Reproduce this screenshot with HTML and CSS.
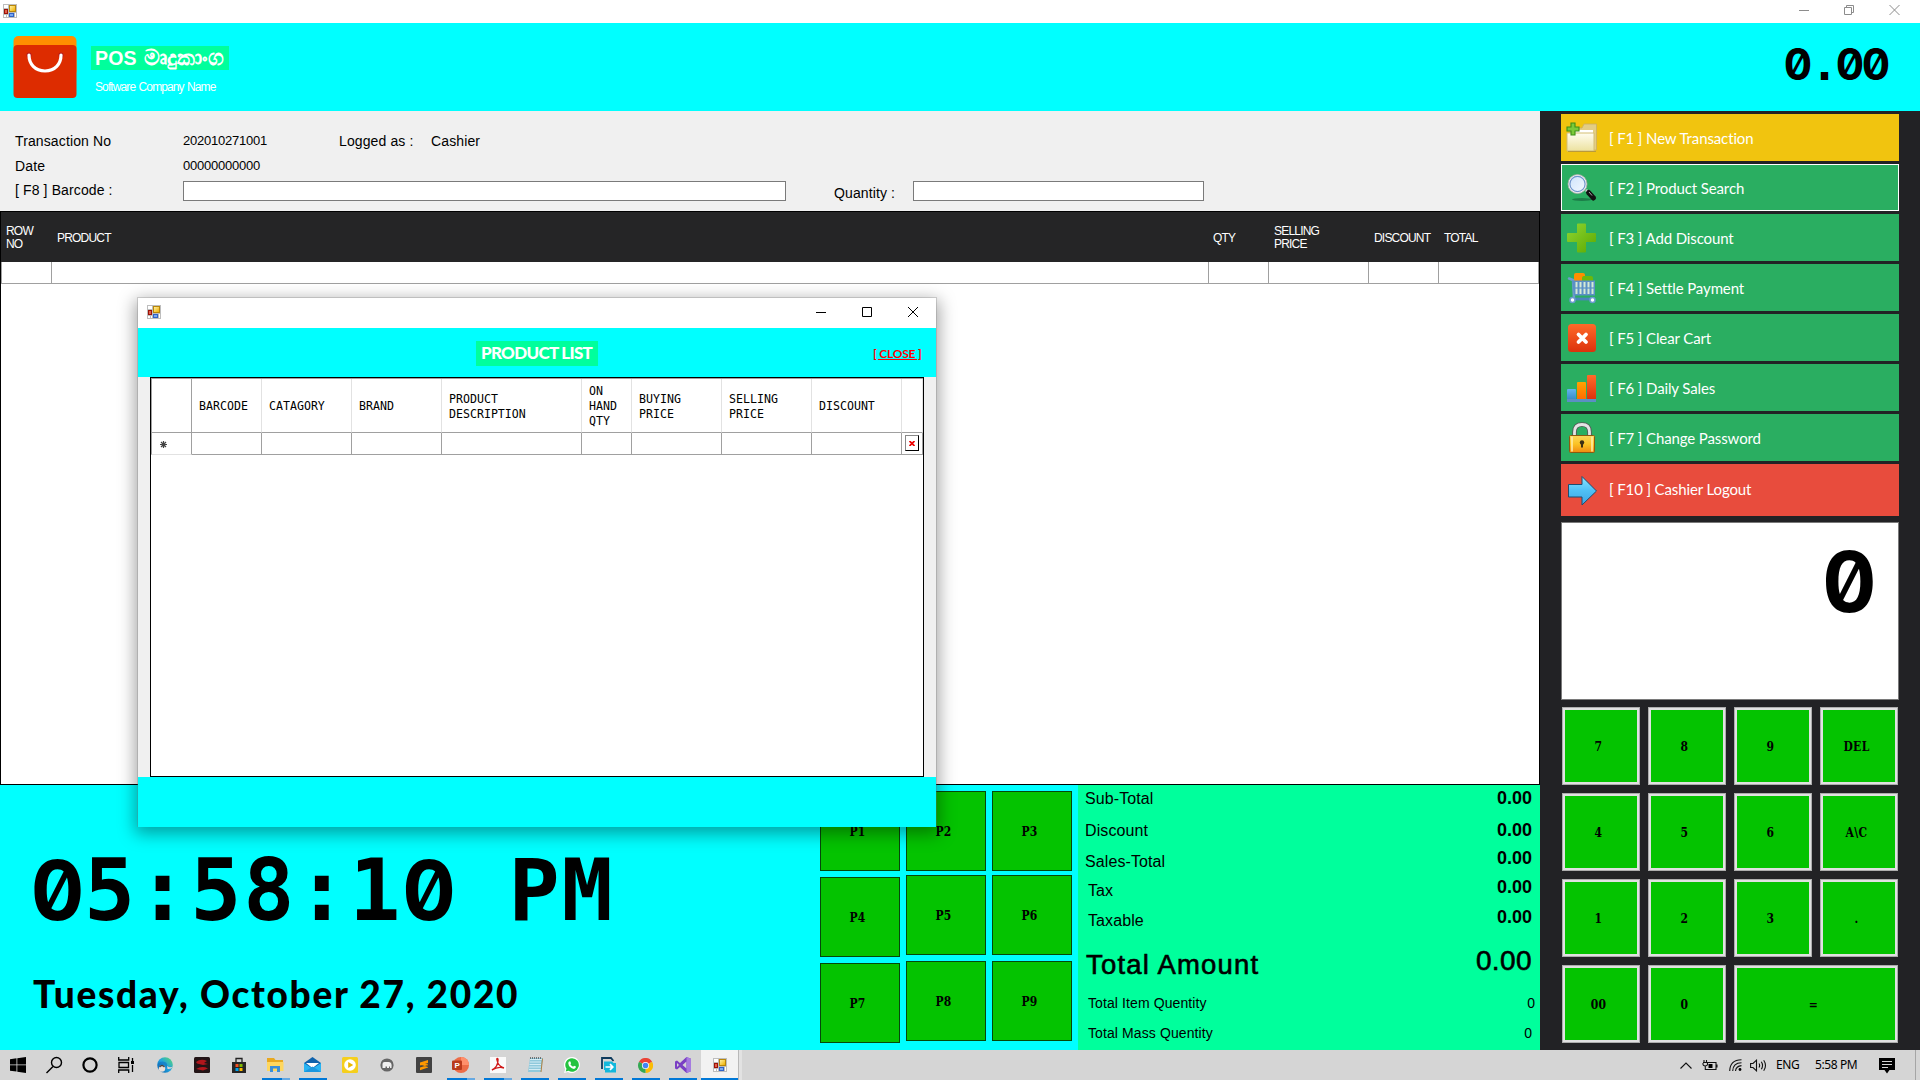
FILE: index.html
```html
<!DOCTYPE html>
<html lang="en">
<head>
<meta charset="utf-8">
<title>POS</title>
<link rel="stylesheet" href="styles.css">
</head>
<body>
<svg class="defs" width="0" height="0">
  <defs>
    <linearGradient id="gFolder" x1="0" y1="0" x2="0" y2="1"><stop offset="0" stop-color="#fffdf0"/><stop offset="1" stop-color="#ece29f"/></linearGradient>
    <linearGradient id="gPlus" x1="0" y1="0" x2="1" y2="1"><stop offset="0" stop-color="#8fd632"/><stop offset="1" stop-color="#5aa800"/></linearGradient>
    <linearGradient id="gRed" x1="0" y1="0" x2="0" y2="1"><stop offset="0" stop-color="#ff6a29"/><stop offset="1" stop-color="#dc320c"/></linearGradient>
    <linearGradient id="gOrange" x1="0" y1="0" x2="0" y2="1"><stop offset="0" stop-color="#ffa300"/><stop offset="1" stop-color="#ff6c00"/></linearGradient>
    <linearGradient id="gBlue" x1="0" y1="0" x2="0" y2="1"><stop offset="0" stop-color="#62b4f0"/><stop offset="1" stop-color="#3a8cc8"/></linearGradient>
    <linearGradient id="gLock" x1="0" y1="0" x2="0" y2="1"><stop offset="0" stop-color="#fbd75c"/><stop offset=".5" stop-color="#fbc324"/><stop offset="1" stop-color="#f08a10"/></linearGradient>
    <linearGradient id="gArrow" x1="0" y1="0" x2="0" y2="1"><stop offset="0" stop-color="#8ae6ff"/><stop offset=".5" stop-color="#4fc0f5"/><stop offset="1" stop-color="#3fa4e2"/></linearGradient>
    <linearGradient id="gYellow" x1="0" y1="0" x2="1" y2="1"><stop offset="0" stop-color="#fff0a0"/><stop offset="1" stop-color="#f0b000"/></linearGradient>
    <linearGradient id="gLens" x1="0" y1="0" x2="1" y2="1"><stop offset="0" stop-color="#cfe4fb"/><stop offset="1" stop-color="#f2f8ff"/></linearGradient>
    <linearGradient id="gEdge" x1="0" y1="1" x2="1" y2="0"><stop offset="0" stop-color="#0c59a4"/><stop offset=".5" stop-color="#1fa3e0"/><stop offset="1" stop-color="#5fdc6a"/></linearGradient>
    <symbol id="form" viewBox="0 0 14 14">
      <path fill="#bdbdbd" d="M0 0h14v14H0z"/><path fill="#fff" d="M1 1h4v3H1zM1 11h2v2H1zM4 11h1v2H4zM12 9h1v4h-1z"/>
      <path fill="#b8860b" d="M6 1h7v7H6z"/><path fill="url(#gYellow)" d="M7 2h5v5H7z"/>
      <path fill="#9c1208" d="M1 5h4v5H1z"/><path fill="#e0604a" d="M2 6h2v3H2z"/>
      <path fill="#2f62c8" d="M6 9h5v4H6z"/><path fill="#7aa8f0" d="M7 10h3v2H7z"/>
    </symbol>
  </defs>
</svg>

<div class="app">
  <div class="titlebar">
    <svg width="14" height="14"><use href="#form"/></svg>
    <div class="winbtns">
      <svg width="10" height="10" viewBox="0 0 10 10"><path d="M0 5.500h10"/></svg>
      <svg width="10" height="10" viewBox="0 0 10 10"><path d="M.5 2.500h7v7h-7zM2.500 2.500v-2h7v7h-2"/></svg>
      <svg width="11" height="10" viewBox="0 0 11 10"><path d="M.5 0l10 10M10.500 0l-10 10"/></svg>
    </div>
  </div>

  <header class="banner">
    <svg class="logo" width="64" height="63" viewBox="0 0 64 63">
      <rect x=".5" width="63" height="40" rx="5" fill="#ff8f00"/>
      <rect x=".5" y="9" width="63" height="53" rx="4" fill="#dd2c00"/>
      <circle cx="16" cy="19" r="2.600" fill="#b71c1c"/><circle cx="48" cy="19" r="2.600" fill="#b71c1c"/>
      <path d="M16 19c0 9 6 16 16 16s16-7 16-16" fill="none" stroke="#fff" stroke-width="3.200" stroke-linecap="round"/>
    </svg>
    <div class="brand">
      <div class="brand-name">POS <span class="sinhala">මෘදුකාංග</span></div>
      <div class="brand-sub">Software Company Name</div>
    </div>
    <div class="banner-total"><span class="z">0</span>.<span class="z">0</span><span class="z">0</span></div>
  </header>

  <main class="body">
    <section class="left">
      <div class="info">
        <span class="lbl r1">Transaction No</span><span class="num r1">202010271001</span>
        <span class="lbl logged">Logged as :</span><span class="lbl cashier">Cashier</span>
        <span class="lbl date">Date</span><span class="num datev">00000000000</span>
        <span class="lbl bar">[ F8 ] Barcode :</span><span class="field barv"></span>
        <span class="lbl qty">Quantity :</span><span class="field qtyv"></span>
      </div>

      <div class="cart">
        <div class="cart-head">
          <span>ROW<br>NO</span><span>PRODUCT</span><span>QTY</span><span>SELLING<br>PRICE</span><span>DISCOUNT</span><span>TOTAL</span>
        </div>
        <div class="cart-row"><i></i><i></i><i></i><i></i><i></i><i></i></div>
      </div>

      <div class="bottom">
        <div class="clock">
          <div class="time"><span class="z">0</span>5:58:1<span class="z">0</span> PM</div>
          <div class="today">Tuesday, October 27, 2020</div>
        </div>
        <div class="presets">
          <div class="pcol first"><b>P1</b><b>P4</b><b>P7</b></div>
          <div class="pcol"><b>P2</b><b>P5</b><b>P8</b></div>
          <div class="pcol"><b>P3</b><b>P6</b><b>P9</b></div>
        </div>
        <div class="totals">
          <div class="tcol names">
            <span>Sub-Total</span><span>Discount</span><span>Sales-Total</span><span class="in">Tax</span><span class="in">Taxable</span>
            <span class="grand">Total Amount</span><span class="small">Total Item Quentity</span><span class="small">Total Mass Quentity</span>
          </div>
          <div class="tcol values">
            <span>0.00</span><span>0.00</span><span>0.00</span><span>0.00</span><span>0.00</span>
            <span class="grand">0.00</span><span class="small out">0</span><span class="small">0</span>
          </div>
        </div>
      </div>
    </section>

    <aside class="side">
      <div class="menu">
        <div class="item new"><svg width="34" height="32" viewBox="0 0 34 32">
          <path d="M5 6h12l2-4h12.500v26H5z" fill="#e3cd84" stroke="#c9ad63" stroke-width=".8"/><path d="M10 8h18v18H10z" fill="#fff"/>
          <path d="M2 11h27v18H2z" fill="url(#gFolder)" stroke="#d3bd72" stroke-width="1"/><path d="M3 29.500h28" stroke="#b99a3c"/>
          <path d="M6 1h4v4h4v4h-4v4H6V9H2V5h4z" fill="#7cc93a" stroke="#3d8f16" stroke-width="1.100"/></svg><span>[ F1 ] New Transaction</span></div>
        <div class="item sel"><svg width="34" height="32" viewBox="0 0 34 32">
          <ellipse cx="17" cy="27.500" rx="10" ry="1.500" fill="#1c7d48"/>
          <path d="M21 18l2 2" stroke="#ddd" stroke-width="2.500"/><path d="M23.500 20.500l5 5.500" stroke="#111" stroke-width="5" stroke-linecap="round"/><path d="M24 20l3 3.500" stroke="#aaa" stroke-width="1"/>
          <circle cx="12.500" cy="12" r="9.500" fill="#f4f4f4" stroke="#a8a8a8" stroke-width=".8"/><circle cx="12.500" cy="12" r="7.600" fill="url(#gLens)" stroke="#6f94cc" stroke-width="1.200"/></svg><span>[ F2 ] Product Search</span></div>
        <div class="item"><svg width="34" height="32" viewBox="0 0 34 32">
          <path d="M13 1.500h7q1 0 1 1V11h9q1 0 1 1v7q0 1-1 1h-9v9.500q0 1-1 1h-7q-1 0-1-1V20H3q-1 0-1-1v-7q0-1 1-1h9V2.500q0-1 1-1z" fill="url(#gPlus)"/></svg><span>[ F3 ] Add Discount</span></div>
        <div class="item"><svg width="34" height="32" viewBox="0 0 34 32">
          <rect x="9" y="1" width="11" height="10" rx="2" fill="#ff8f00"/><rect x="17" y="4" width="11" height="8" rx="2" fill="#6cb80c"/>
          <path d="M4 6.500l4 1.500 1 18" fill="none" stroke="#6f9dcc" stroke-width="2.500" stroke-linecap="round"/>
          <path d="M7 8.500h23v15H9z" fill="#5b90c6"/><path d="M11.500 10v12M15.500 10v12M19.500 10v12M23.500 10v12M27.500 10v12" stroke="#d5ead5" stroke-width="2"/><path d="M10 16h19" stroke="#5b90c6" stroke-width="1.200"/>
          <path d="M8 27h21" stroke="#4a84bc" stroke-width="2.800"/><circle cx="7.500" cy="28" r="2.500" fill="#fff" stroke="#6c9bd0" stroke-width="1.500"/><circle cx="27.500" cy="28" r="2.500" fill="#fff" stroke="#6c9bd0" stroke-width="1.500"/></svg><span>[ F4 ] Settle Payment</span></div>
        <div class="item"><svg width="34" height="32" viewBox="0 0 34 32">
          <rect x="3" y="2" width="28" height="28" rx="3.500" fill="url(#gRed)"/><path d="M13.500 12.500l7.500 7.500M21 12.500L13.500 20" stroke="#fff" stroke-width="3.800" stroke-linecap="round"/></svg><span>[ F5 ] Clear Cart</span></div>
        <div class="item"><svg width="34" height="32" viewBox="0 0 34 32">
          <path d="M2 18q0-1 1-1h7q1 0 1 1v9H2z" fill="url(#gBlue)"/><path d="M12 11q0-1 1-1h7q1 0 1 1v16h-9z" fill="url(#gOrange)"/><path d="M22 4q0-1 1-1h7q1 0 1 1v23h-9z" fill="url(#gRed)"/><path d="M2 27h29v3H2z" fill="#5b8fc4"/></svg><span>[ F6 ] Daily Sales</span></div>
        <div class="item"><svg width="34" height="32" viewBox="0 0 34 32">
          <path d="M9.500 15V10q0-7.500 7.500-7.500T24.500 10v5" fill="none" stroke="#555" stroke-width="4.500"/><path d="M9.500 15V10q0-7.500 7.500-7.500T24.500 10v5" fill="none" stroke="#e4e4e4" stroke-width="2.800"/>
          <rect x="4.500" y="13.500" width="25" height="17" rx="1" fill="url(#gLock)" stroke="#8a5a10" stroke-width="1"/><path d="M7 14.500v15M27 14.500v15" stroke="#fff0b0" stroke-width="1.500"/>
          <circle cx="17" cy="20.500" r="2.200" fill="#3b2f14"/><path d="M17 21v4.500" stroke="#3b2f14" stroke-width="2"/></svg><span>[ F7 ] Change Password</span></div>
        <div class="item out"><svg width="34" height="32" viewBox="0 0 34 32">
          <path d="M3.500 10.500H17V2.500L31.500 17 17 31V23H3.500z" fill="url(#gArrow)" stroke="#1d4d70" stroke-width="1"/></svg><span>[ F10 ] Cashier Logout</span></div>
      </div>
      <div class="display"><span class="z">0</span></div>
      <div class="keypad">
        <b>7</b><b>8</b><b>9</b><b>DEL</b><b>4</b><b>5</b><b>6</b><b>A\C</b><b>1</b><b>2</b><b>3</b><b>.</b><b>00</b><b>0</b><b class="wide">=</b>
      </div>
    </aside>
  </main>

  <footer class="taskbar">
    <div class="tasks">
      <span class="t"><svg width="16" height="16" viewBox="0 0 16 16"><path d="M0 2.200l6.500-.9v6.200H0zM7.300 1.200L16 0v7.500H7.300zM0 8.300h6.500v6.200L0 13.700zM7.300 8.300H16V16l-8.700-1.200z"/></svg></span>
      <span class="t"><svg width="18" height="18" viewBox="0 0 18 18"><g fill="none" stroke="#000" stroke-width="1.400"><circle cx="11.500" cy="6.500" r="5"/><path d="M8 10.500L1.500 17"/></g></svg></span>
      <span class="t"><svg width="16" height="16" viewBox="0 0 16 16"><circle cx="8" cy="8" r="6.600" fill="none" stroke="#000" stroke-width="2.200"/></svg></span>
      <span class="t"><svg width="17" height="16" viewBox="0 0 17 16"><g fill="none" stroke="#000" stroke-width="1.300"><path d="M.7 0v3h10V0M.7 16v-3h10v3M1 5.500h9.500v5H1zM14.500 1v3M14.500 8v7"/></g><path d="M13 4h3v3h-3z"/></svg></span>
      <span class="t e"><svg width="16" height="16" viewBox="0 0 16 16"><circle cx="8" cy="8" r="7.800" fill="url(#gEdge)"/><path d="M1 6.500Q4 3.500 8 5q3 1.500 2 4.500 3 1 5.500-.5Q14 12 10 11 8 8 5.500 8 3 8 1 10z" fill="#0f6cbd" opacity=".55"/><path d="M10 9q2 2 5.800.5-1.500 3-5.300 2.500z" fill="#d5d5d5"/><circle cx="5" cy="11.500" r="3.200" fill="#eadfd8"/><path d="M2.500 10q2.500-3 5 0" stroke="#444" stroke-width="1.300" fill="none"/></svg></span>
      <span class="t"><svg width="16" height="16" viewBox="0 0 16 16"><rect width="16" height="16" rx="1.500" fill="#221416"/><path d="M2 5q5-4 11-1l-3 2 4 1-5 1-6-1.500zM2 12q6-3.500 12-.5l-5 2z" fill="#b0161c"/></svg></span>
      <span class="t"><svg width="16" height="17" viewBox="0 0 16 17"><path d="M5 5V1.500h6V5" fill="none" stroke="#222" stroke-width="1.300"/><path d="M1 5h14v11H1z" fill="#262626"/><path d="M4.500 7h3v3h-3z" fill="#f25022"/><path d="M8.500 7h3v3h-3z" fill="#7fba00"/><path d="M4.500 11h3v3h-3z" fill="#00a4ef"/><path d="M8.500 11h3v3h-3z" fill="#ffb900"/></svg></span>
      <span class="t on two"><svg width="17" height="16" viewBox="0 0 17 16"><path d="M0 1h7l1.500 2H16v11H0z" fill="#e8a820"/><path d="M0 5h16.500v9H0z" fill="#ffd75e"/><path d="M3 15V9h10v6h-3v-3.500H6V15z" fill="#3a8fd9"/></svg></span>
      <span class="t on"><svg width="17" height="16" viewBox="0 0 17 16"><path d="M0 6l8.500-6L17 6v9H0z" fill="#0f62ac"/><path d="M2 6h13l-6.500 5z" fill="#fff"/><path d="M0 6l8.500 5.500L17 6v9H0z" fill="#28b3f2"/><path d="M0 15l8.500-5.500L17 15z" fill="#1c97e0"/></svg></span>
      <span class="t"><svg width="16" height="16" viewBox="0 0 16 16"><rect width="16" height="16" rx="1.500" fill="#f5cf1d"/><circle cx="8" cy="8" r="5.800" fill="#fff"/><path d="M6.200 5l5 3-5 3z" fill="#e8b800"/></svg></span>
      <span class="t"><svg width="14" height="14" viewBox="0 0 14 14"><circle cx="7" cy="7" r="6.600" fill="#666"/><path d="M2.500 10V6q0-2 2-2h3q2-.5 3.500 1 1 1.500.5 5H10V8.500H9V10H7V8.500H5.500V10z" fill="#eee"/></svg></span>
      <span class="t"><svg width="16" height="16" viewBox="0 0 16 16"><rect width="16" height="16" rx="1" fill="#424242"/><path d="M12 3L4 5.500v3l8-2.500zM4 7.500l8 2.500v-2.500L5 5.500zM4 10.500L12 8v2.500L4 13.300z" fill="#ff9800"/></svg></span>
      <span class="t on two"><svg width="17" height="16" viewBox="0 0 17 16"><circle cx="9" cy="8" r="8" fill="#ed6c47"/><path d="M9 0a8 8 0 0 1 8 8H9z" fill="#ff8f6b"/><rect y="3.500" width="10" height="9.500" rx="1" fill="#b93a1c"/><text x="2.500" y="11" class="pp">P</text></svg></span>
      <span class="t on two"><svg width="16" height="16" viewBox="0 0 16 16"><path d="M0 0h16v16H0z" fill="#fafafa"/><path d="M2 13q6-3 6-10 0-1.500-.7-1.500T7 3q1 6 7 8-6-2-12 2z" fill="none" stroke="#d01818" stroke-width="1.400"/></svg></span>
      <span class="t on"><svg width="16" height="16" viewBox="0 0 16 16"><path d="M3 1h13l-2 14H1z" fill="#8fc9dc"/><path d="M3 2.500h12M2.800 5H14M2.500 7.500H14M2.200 10H14M2 12.500h12" stroke="#d9f0f7" stroke-width=".9"/><path d="M3 1h12" stroke="#555" stroke-width="1.500" stroke-dasharray="1 1"/><path d="M15.500 1.500L14 15" stroke="#b08040"/></svg></span>
      <span class="t on"><svg width="16" height="16" viewBox="0 0 16 16"><path d="M8 0a8 8 0 1 1-4 15L0 16l1.200-3.800A8 8 0 0 1 8 0z" fill="#fff"/><path d="M8 1.200a6.800 6.800 0 1 1-3.500 12.600l-2.800.7.8-2.700A6.800 6.800 0 0 1 8 1.200z" fill="#25c340"/><path d="M5 4.500l1.200-.2.900 2-.7 1q1 1.800 2.700 2.400l.9-1 2 .9q0 2-2 2.300Q5 11 4.300 6.500q0-1.400.7-2z" fill="#fff"/></svg></span>
      <span class="t on"><svg width="16" height="16" viewBox="0 0 16 16"><path d="M1 12V1h9l2.500 3" fill="none" stroke="#0d3a5c" stroke-width="1.800"/><path d="M3 4.500h8L12.500 6H15v9.500H4V13H3z" fill="#12b8dc"/><path d="M4.500 10h7M9 7.200l2.800 2.800L9 12.800" stroke="#fff" stroke-width="1.700" fill="none"/></svg></span>
      <span class="t on"><svg width="15" height="15" viewBox="0 0 16 16"><path d="M8 8L1.100 4A8 8 0 0 1 15 4z" fill="#ea4335"/><path d="M8 8l7-4a8 8 0 0 1-7 12z" fill="#fbbc05"/><path d="M8 8v8A8 8 0 0 1 1.100 4z" fill="#34a853"/><circle cx="8" cy="8" r="3.800" fill="#fff"/><circle cx="8" cy="8" r="3" fill="#4285f4"/></svg></span>
      <span class="t on"><svg width="16" height="16" viewBox="0 0 16 16"><path d="M11.500 0L16 1.800v12.400L11.500 16 5 10 2 12.500l-2-1v-7l2-1L5 6zM11.500 4.500L7.500 8l4 3.500zM2 6v4l2-2z" fill="#7a3fc4" fill-rule="evenodd"/><path d="M11.500 0L16 1.800v12.400L11.500 16z" fill="#a57be0"/></svg></span>
      <span class="t on active"><svg width="14" height="14"><use href="#form"/></svg></span>
    </div>
    <div class="tray">
      <svg class="chev" width="12" height="7" viewBox="0 0 12 7"><path d="M.5 6.500L6 1l5.500 5.500"/></svg>
      <svg class="bat" width="16" height="11" viewBox="0 0 16 11"><path d="M6 2.500h8v7H5.500M15 4.500v3M2 0v2M4.500 0v2M1 2.500h4.500v2q0 1-2.200 1.500V9.500H6M1 3v1.500q0 1 2 1.500"/><path d="M6.500 4h4v4h-4z" class="solid"/></svg>
      <svg class="wifi" width="13" height="12" viewBox="0 0 13 12"><path d="M.7 12Q1 1 12.500.8M3.700 12Q4 4 12.500 3.800M6.500 12Q7 7 12.500 6.600"/><circle cx="11" cy="10.500" r="1.400"/></svg>
      <svg class="vol" width="17" height="13" viewBox="0 0 17 13"><path d="M.6 4.500H3L6.500 1.200v10.600L3 8.500H.6zM9 4.500q1.300 2 0 4M11.300 2.800q2.500 3.700 0 7.400M13.700 1.200q3.600 5.300 0 10.600"/></svg>
      <span class="lang">ENG</span><span class="hour">5:58 PM</span>
      <svg class="note" width="16" height="16" viewBox="0 0 16 16"><path class="solid" d="M0 0h16v12h-5.500L8 15.500 5.500 12H0z"/><path class="lines" d="M3 3.500h10M3 6.500h10M3 9.500h6"/></svg>
      <i class="peek"></i>
    </div>
  </footer>

  <div class="dialog">
    <div class="dlg-title">
      <svg width="14" height="14"><use href="#form"/></svg>
      <div class="dlg-btns">
        <svg width="10" height="10" viewBox="0 0 10 10"><path d="M0 5.500h10"/></svg>
        <svg width="10" height="10" viewBox="0 0 10 10"><path d="M.5.500h9v9h-9z"/></svg>
        <svg width="10" height="10" viewBox="0 0 10 10"><path d="M0 0l10 10M10 0L0 10"/></svg>
      </div>
    </div>
    <div class="dlg-head"><span class="dlg-name">PRODUCT LIST</span><span class="dlg-close">[ CLOSE ]</span></div>
    <div class="dlg-body">
      <div class="list">
        <div class="lrow lhead"><span></span><span>BARCODE</span><span>CATAGORY</span><span>BRAND</span><span>PRODUCT<br>DESCRIPTION</span><span>ON<br>HAND<br>QTY</span><span>BUYING<br>PRICE</span><span>SELLING<br>PRICE</span><span>DISCOUNT</span><span></span></div>
        <div class="lrow lnew"><span><svg width="7" height="7" viewBox="0 0 7 7"><path d="M3.500 0v7M0 3.500h7M1 1l5 5M6 1L1 6" stroke="#444" stroke-width="1.200"/></svg></span><span></span><span></span><span></span><span></span><span></span><span></span><span></span><span></span><span><em><svg width="6" height="5" viewBox="0 0 6 5"><path d="M.5 0l5 5M5.500 0l-5 5" stroke="#e00" stroke-width="1.700"/></svg></em></span></div>
      </div>
    </div>
    <div class="dlg-foot"></div>
  </div>
</div>
</body>
</html>
```
FILE: styles.css
```css
* { box-sizing: border-box; }
body { margin: 0; overflow: hidden; font-family: "Liberation Sans", Arial, sans-serif; color: #000; }
.defs { position: absolute; }
svg { display: block; flex: none; }
.app { position: relative; width: 1920px; height: 1080px; display: flex; flex-direction: column; background: #fff; }

/* main window title bar */
.titlebar { height: 23px; display: flex; justify-content: space-between; padding: 4px 20px 0 3px; }
.winbtns { display: flex; gap: 35px; padding-top: 1px; }
.winbtns path { fill: none; stroke: #8c8c8c; }

/* slashed zero, one fixed-pitch cell wide */
.z { display: inline-flex; justify-content: center; font-family: Inter, sans-serif; font-feature-settings: "zero", "tnum"; letter-spacing: 0; }

/* banner */
.banner { height: 88px; background: #0ff; display: flex; align-items: flex-start; padding: 13px 31px 0 13px; }
.brand { margin: 10px 0 0 14px; color: #fff; }
.brand-name { display: flex; gap: 7px; width: 138px; height: 24px; padding-left: 4px; background: #00ff9c; font-size: 19.500px; line-height: 24px; font-weight: bold; white-space: nowrap; letter-spacing: .2px; }
.sinhala { font-size: 22px; letter-spacing: 0; }
.brand-sub { margin-top: 9px; padding-left: 4px; font-size: 12px; line-height: 16px; letter-spacing: -.9px; word-spacing: 1px; }
.banner-total { margin-left: auto; padding-top: 3px; font: bold 45px/50px "DejaVu Sans Mono", monospace; letter-spacing: -1px; }
.banner-total .z { width: 26px; font-size: 44px; }

.body { height: 939px; display: flex; }
.left { width: 1540px; display: flex; flex-direction: column; }

/* transaction info */
.info { height: 100px; background: #f0f0f0; display: grid; padding: 20px 0 0 15px; grid-template-columns: 168px 156px 92px 403px 79px 291px; grid-template-rows: 25px 25px 20px; line-height: 20px; }
.lbl { font-size: 14px; letter-spacing: .12px; white-space: nowrap; }
.num { font-size: 13px; letter-spacing: -.22px; padding-bottom: 1px; }
.date, .bar { grid-column: 1; }
.bar { margin-top: -1px; }
.datev { grid-column: 2; }
.barv { grid-column: 2 / 5; width: 603px; }
.qty { grid-column: 5; padding-top: 2px; }
.field { height: 20px; border: 1px solid #7a7a7a; background: #fff; }

/* cart grid */
.cart { height: 574px; border: 1px solid #000; background: #fff; }
.cart-head, .cart-row { display: grid; grid-template-columns: 51px 1156px 61px 100px 70px 100px; }
.cart-head { height: 50px; align-items: center; background: #252526; color: #fff; font-size: 12px; line-height: 13px; letter-spacing: -.8px; padding-top: 2px; }
.cart-head span { padding-left: 5px; }
.cart-row { height: 22px; border-left: 1px solid #a0a0a0; border-bottom: 1px solid #a0a0a0; grid-template-columns: 50px 1157px 60px 100px 70px 100px; }
.cart-row i { border-right: 1px solid #a0a0a0; }

/* bottom area */
.bottom { height: 265px; display: flex; background: #0ff; }
.clock { width: 820px; padding-left: 31px; }
.time { margin-top: 55px; font: bold 85px/100px "DejaVu Sans Mono", monospace; letter-spacing: 1.9px; white-space: pre; }
.time .z { width: 53px; font-size: 83px; }
.today { margin-top: 28px; padding-left: 2px; font: 900 37px/50px Lato, sans-serif; letter-spacing: 1.7px; white-space: nowrap; }
.presets { width: 258px; display: flex; gap: 6px; padding-top: 6px; }
.pcol { display: flex; flex-direction: column; gap: 6px; width: 80px; }
.pcol b { height: 80px; border: 1px solid #06480a; background: #04c300; display: flex; align-items: center; justify-content: center; padding: 2px 5px 0 0; }
.pcol b:nth-child(2) { margin-top: -2px; }
.first b:nth-child(2) { margin-top: 0; }
.pcol b, .keypad b { font: bold 12px/16px "DejaVu Serif Condensed", "DejaVu Serif", serif; font-stretch: condensed; letter-spacing: .3px; }

.totals { width: 462px; background: #00ff9c; display: flex; justify-content: space-between; padding: 0 4px 0 7px; }
.tcol { display: flex; flex-direction: column; font-size: 16px; line-height: 20px; white-space: nowrap; }
.names span { letter-spacing: .1px; }
.names span:nth-child(1) { margin-top: 4px; }
.names span:nth-child(2) { margin-top: 12px; }
.names span:nth-child(3) { margin-top: 11px; }
.names span:nth-child(4) { margin-top: 9px; }
.names span:nth-child(5) { margin-top: 10px; }
.names .grand { margin-top: 19px; padding-left: 1px; font-size: 27.500px; line-height: 30px; letter-spacing: 1.2px; -webkit-text-stroke: .6px #000; }
.names span:nth-child(7) { margin-top: 13px; padding-left: 3px; }
.names span:nth-child(8) { margin-top: 10px; padding-left: 3px; }
.names .in { padding-left: 3px; }
.values { text-align: right; font-weight: bold; font-size: 18px; }
.values span { padding-right: 4px; }
.values span:nth-child(1) { margin-top: 3px; }
.values span:nth-child(2) { margin-top: 12px; }
.values span:nth-child(3) { margin-top: 8px; }
.values span:nth-child(4) { margin-top: 9px; }
.values span:nth-child(5) { margin-top: 10px; }
.values .grand { margin-top: 19px; font-size: 28px; line-height: 30px; font-weight: normal; letter-spacing: .4px; -webkit-text-stroke: .6px #000; }
.values span:nth-child(7) { margin-top: 17px; }
.values span:nth-child(8) { margin-top: 10px; }
.tcol .small { font-size: 14px; font-weight: normal; }
.values .out { padding-right: 1px; }

/* right panel */
.side { width: 380px; background: #222225; padding: 3px 21px 0; }
.menu { display: flex; flex-direction: column; gap: 3px; }
.item { height: 47px; display: flex; align-items: center; padding-left: 4px; background: #2aae61; color: #fff; }
.item span { margin: 0 0 0 10px; font: 15px/20px Lato, sans-serif; letter-spacing: -.12px; white-space: nowrap; }
.item.new { background: #f1c40f; }
.item.sel { border: 1px solid #fff; padding-left: 3px; }
.item.out { height: 52px; background: #e84c3d; }
.item.out span { margin-top: -2px; }
.display { height: 178px; margin-top: 6px; border: 1px solid #7a7a7a; background: #fff; text-align: right; padding: 9px 22px 0 0; font: bold 84px/100px "DejaVu Sans Mono", monospace; }
.display .z { width: 53px; }
.keypad { margin: 7px 1px 0; display: grid; grid-template-columns: repeat(4, 78px); grid-auto-rows: 78px; gap: 8px; }
.keypad b { border: 1px solid #adadad; box-shadow: inset 0 0 0 2px #e1e1e1; background: #04c300; display: flex; align-items: center; justify-content: center; padding: 1px 5px 0 0; }
.keypad .wide { grid-column: span 2; }

/* taskbar */
.taskbar { height: 30px; background: #d5d5d5; display: flex; justify-content: space-between; }
.tasks { display: flex; }
.t { width: 36px; height: 30px; display: flex; align-items: center; justify-content: center; position: relative; }
.t.e, .t.e ~ .t { width: 37px; }
.t.e { margin-left: 2px; }
.t.on::after { content: ""; position: absolute; left: 5px; right: 4px; bottom: 0; height: 2px; background: #0078d7; }
.t.two::after { background: linear-gradient(90deg, #0078d7 20px, #66a9e2 20px); }
.tasks .active { width: 33px; margin-left: 0; background: #f2f2f2; box-shadow: 1px 0 0 #b8b8b8, 4px 0 0 #e2e2e2; }
.tasks .active::after { left: 0; right: 0; }
.pp { font: bold 8px "Liberation Sans", sans-serif; fill: #fff; }
.tray { display: flex; align-items: center; font: 12px/16px "Noto Sans", sans-serif; letter-spacing: -.4px; width: 240px; }
.tray path { fill: none; stroke: #111; stroke-width: 1.100; }
.wifi { margin-left: 11px; }
.bat { margin-left: 10px; }
.vol { margin-left: 8px; }
.lang { margin-left: 9px; width: 39px; }
.hour { width: 64px; white-space: nowrap; }
.tray .solid { fill: #000; stroke: none; }
.tray .lines { stroke: #d4d4d4; }
.note { margin-top: 1px; }
.peek { width: 1px; height: 30px; background: #a5a5a5; margin-left: 20px; }

/* floating product list window */
.dialog { position: absolute; left: 137px; top: 297px; width: 800px; height: 530px; border: 1px solid rgba(120,120,120,.28); border-bottom: 0; background: #f0f0f0; background-clip: padding-box; box-shadow: 0 5px 16px 2px rgba(0,0,0,.36); }
.dlg-title { height: 30px; background: #fff; display: flex; justify-content: space-between; padding: 7px 18px 0 9px; }
.dlg-btns { display: flex; gap: 36px; padding-top: 2px; }
.dlg-btns path { fill: none; stroke: #000; }
.dlg-head { height: 49px; background: #0ff; display: flex; padding-top: 13px; }
.dlg-name { width: 122px; height: 25px; margin-left: 338px; padding-left: 5px; background: #00ff9c; color: #fff; font: 900 17px/23px Lato, sans-serif; white-space: nowrap; letter-spacing: -.7px; }
.dlg-close { margin-left: 275px; color: #f00; font: bold 12px/26px Lato, sans-serif; letter-spacing: -.2px; text-decoration: underline; white-space: nowrap; }
.dlg-body { height: 400px; padding: 0 12px; }
.list { height: 400px; border: 1px solid #000; background: #fff; }
.lrow { display: grid; grid-template-columns: 41px 70px 90px 90px 140px 50px 90px 90px 90px 21px; }
.lrow span { display: flex; align-items: center; border-right: 1px solid #a0a0a0; border-bottom: 1px solid #a0a0a0; }
.lhead { height: 55px; border-top: 1px solid #a0a0a0; }
.lhead span { padding: 2px 0 0 7px; font: 11.600px/15px "DejaVu Sans Mono", monospace; white-space: nowrap; border-right-color: #e2e2e2; }
.lrow span:first-child { border-left: 1px solid #a0a0a0; border-right-color: #a0a0a0; }
.lnew { height: 22px; }
.lnew span:first-child { padding: 2px 0 0 8px; border-bottom-color: #e2e2e2; }
.lnew span:last-child { padding-left: 3px; }
.lnew em { width: 14px; height: 16px; border: 1px solid #888; border-right: 1px solid #000; border-bottom: 1px solid #000; display: flex; align-items: center; justify-content: center; flex: none; margin-top: -1px; }
.dlg-foot { height: 50px; background: #0ff; }
```
